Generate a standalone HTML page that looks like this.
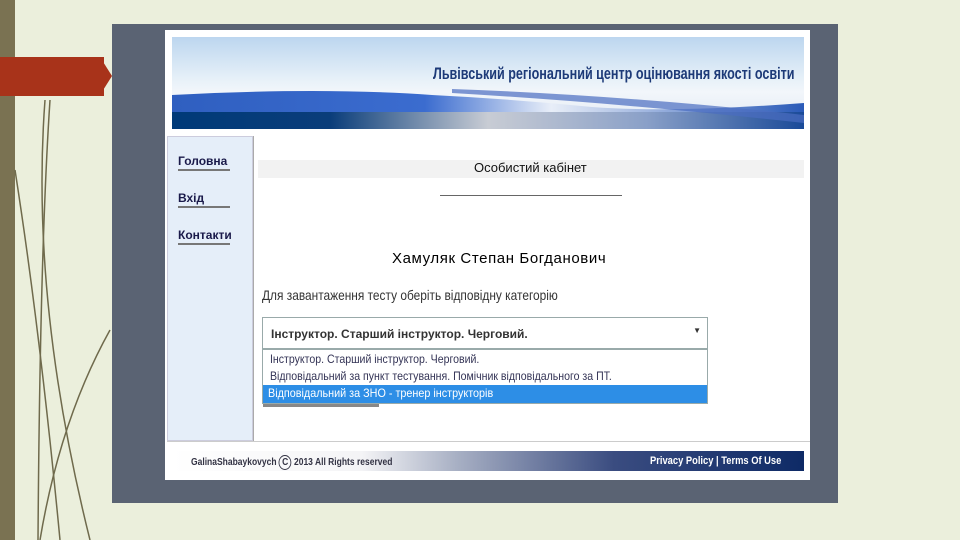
<!DOCTYPE html>
<html><head><meta charset="utf-8"><style>
body{margin:0;width:960px;height:540px;background:#ebefdc;position:relative;overflow:hidden;font-family:"Liberation Sans",sans-serif}
div{position:absolute;box-sizing:border-box}
</style></head><body>
<div style="left:0;top:0;width:15px;height:540px;background:#7a7252"></div>
<svg style="position:absolute;left:0;top:0" width="120" height="540"><g stroke="#6f6a4c" stroke-width="1.5" fill="none"><path d="M50 100 Q40 250 38 540"/><path d="M15 170 Q40 330 60 540"/><path d="M45 100 Q30 300 90 540"/><path d="M110 330 Q60 420 40 540"/></g></svg>
<div style="left:0;top:57px;width:104px;height:39px;background:#a8331a"></div>
<div style="left:100px;top:57px;width:0;height:0;border-top:19.5px solid transparent;border-bottom:19.5px solid transparent;border-left:12px solid #a8331a"></div>
<div style="left:112px;top:24px;width:726px;height:479px;background:#5a6373"></div>
<div style="left:165px;top:30px;width:645px;height:450px;background:#fff"></div>
<div style="left:172px;top:37px;width:632px;height:92px;background:linear-gradient(180deg,#bcd6ef 0%,#e6f0f8 45%,#f2f6fb 60%,#e0e8f2 100%)"></div>
<svg style="position:absolute;left:172px;top:37px" width="632" height="92"><defs><linearGradient id="g" x1="0" x2="1"><stop offset="0" stop-color="#003a78"/><stop offset="0.25" stop-color="#0a3d7a"/><stop offset="0.5" stop-color="#c8ccd4"/><stop offset="0.75" stop-color="#8aa0c8"/><stop offset="1" stop-color="#1a4a98"/></linearGradient><linearGradient id="h" x1="0" x2="1"><stop offset="0" stop-color="#2f5fc0"/><stop offset="0.4" stop-color="#3b6ccf"/><stop offset="0.6" stop-color="#e8eef8"/><stop offset="1" stop-color="#2a5ab8"/></linearGradient></defs><path d="M0 58 Q150 50 260 58 Q340 62 420 70 Q500 76 632 66 L632 92 L0 92Z" fill="url(#h)"/><path d="M0 75 L632 75 L632 92 L0 92Z" fill="url(#g)"/><path d="M280 52 Q450 58 632 78 L632 86 Q450 66 280 56Z" fill="#4a6cc0" opacity=".7"/></svg>
<div style="left:433px;top:64px;color:#1d3a78;font-size:17px;font-weight:bold;transform:scaleX(.74);transform-origin:left;white-space:nowrap">Львівський регіональний центр оцінювання якості освіти</div>
<div style="left:167px;top:136px;width:86px;height:305px;background:#e5eef9;border:1px solid #ccd"></div>
<div style="left:253px;top:136px;width:1px;height:305px;background:#aaa"></div>
<div style="left:178px;top:154px;font-size:12px;font-weight:bold;color:#1a1a4a;border-bottom:2px solid #777;width:52px;padding-bottom:1px">Головна</div>
<div style="left:178px;top:191px;font-size:12px;font-weight:bold;color:#1a1a4a;border-bottom:2px solid #777;width:52px;padding-bottom:1px">Вхід</div>
<div style="left:178px;top:228px;font-size:12px;font-weight:bold;color:#1a1a4a;border-bottom:2px solid #777;width:52px;padding-bottom:1px">Контакти</div>
<div style="left:258px;top:160px;width:546px;height:18px;background:#f2f2f2"></div>
<div style="left:474px;top:160px;font-size:13px;color:#111">Особистий кабінет</div>
<div style="left:440px;top:195px;width:182px;height:1px;background:#666"></div>
<div style="left:392px;top:250px;font-size:15px;color:#000;letter-spacing:.6px">Хамуляк Степан Богданович</div>
<div style="left:262px;top:287px;font-size:14px;color:#333;transform:scaleX(.85);transform-origin:left;white-space:nowrap">Для завантаження тесту оберіть відповідну категорію</div>
<div style="left:262px;top:317px;width:446px;height:32px;border:1px solid #9aa;background:#fff;font-size:12px;font-weight:bold;color:#333;padding:9px 8px">Інструктор. Старший інструктор. Черговий.<span style="position:absolute;right:6px;top:8px;font-size:8px">▼</span></div>
<div style="left:262px;top:349px;width:446px;height:55px;border:1px solid #9aa;background:#fff"></div>
<div style="left:270px;top:352px;font-size:12px;color:#335;transform:scaleX(.88);transform-origin:left;white-space:nowrap">Інструктор. Старший інструктор. Черговий.</div>
<div style="left:270px;top:369px;font-size:12px;color:#335;transform:scaleX(.88);transform-origin:left;white-space:nowrap">Відповідальний за пункт тестування. Помічник відповідального за ПТ.</div>
<div style="left:263px;top:385px;width:444px;height:18px;background:#2d8ee6"></div>
<div style="left:268px;top:386px;font-size:12px;color:#fff;transform:scaleX(.9);transform-origin:left;white-space:nowrap">Відповідальний за ЗНО - тренер інструкторів</div>
<div style="left:263px;top:404px;width:116px;height:3px;background:#888"></div>
<div style="left:167px;top:441px;width:643px;height:1px;background:#ccc"></div>
<div style="left:172px;top:451px;width:632px;height:20px;background:linear-gradient(90deg,#fff 0%,#f4f4f6 30%,#a8b0c4 45%,#3a4c80 70%,#0e2a66 100%)"></div>
<div style="left:191px;top:455px;font-size:10px;font-weight:bold;color:#334;transform:scaleX(.85);transform-origin:left;white-space:nowrap">GalinaShabaykovych <span style="display:inline-block;border:1.5px solid #334;border-radius:50%;width:13px;height:13px;text-align:center;line-height:13px">C</span> 2013 All Rights reserved</div>
<div style="left:650px;top:455px;font-size:11px;font-weight:bold;color:#fff;transform:scaleX(.85);transform-origin:left;white-space:nowrap">Privacy Policy | Terms Of Use</div>
</body></html>
